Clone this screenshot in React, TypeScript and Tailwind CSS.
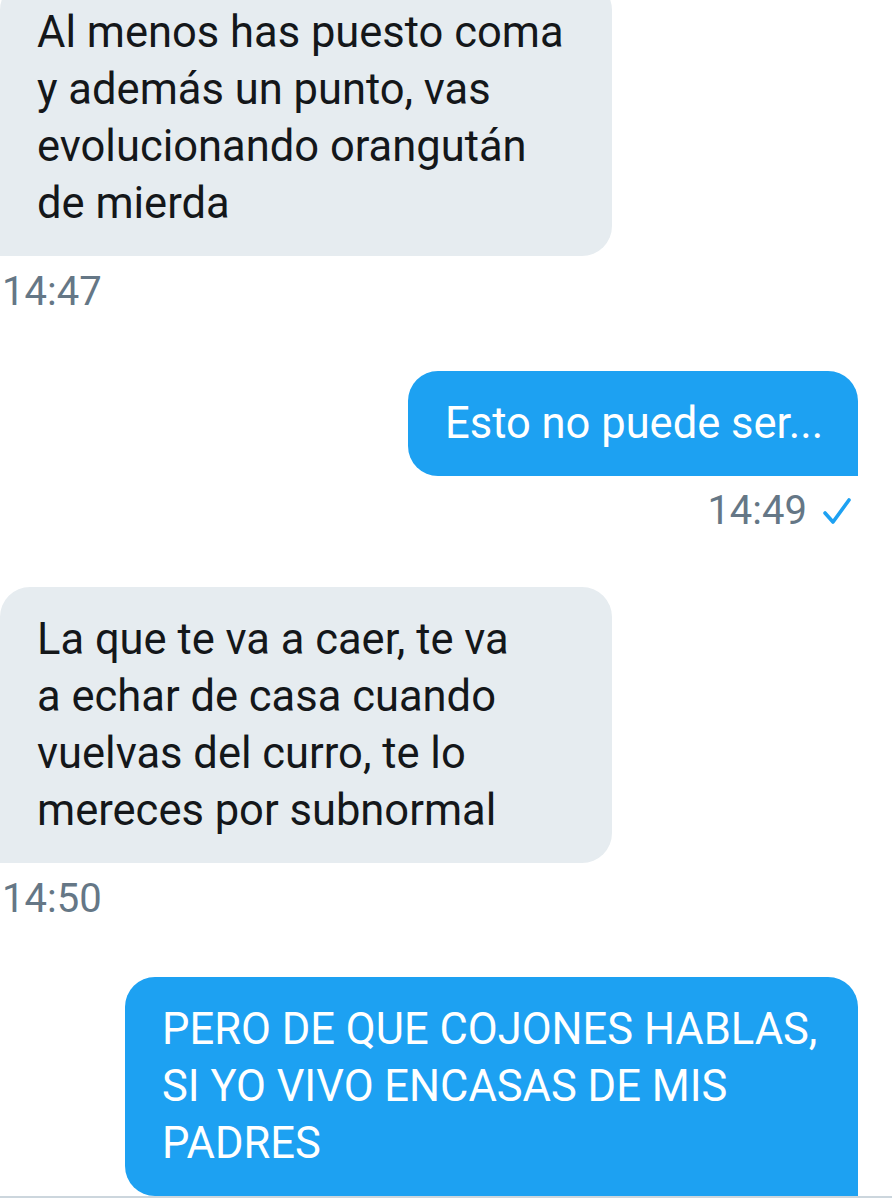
import React from "react";

const font = { fontFamily: "Roboto, 'Noto Sans', sans-serif" };

const Lines = ({ lines }: { lines: string[] }) => (
  <>
    {lines.map((l) => (
      <div key={l} className="whitespace-nowrap">
        {l}
      </div>
    ))}
  </>
);

const Received = ({ lines, time, className = "" }: { lines: string[]; time: string; className?: string }) => (
  <div className={`flex flex-col items-start ${className}`}>
    <div className="w-[612px] rounded-tl-[30px] rounded-tr-[30px] rounded-br-[30px] bg-[#e6ecf0] px-[37px] py-[24px] text-[43.5px] leading-[57px] text-[#14171a]">
      <Lines lines={lines} />
    </div>
    <div className="mt-[14px] h-[44px] pl-[2px] text-[40px] leading-[44px] text-[#657786]">{time}</div>
  </div>
);

const Sent = ({
  lines,
  time,
  width,
  className = "",
}: {
  lines: string[];
  time?: string;
  width: string;
  className?: string;
}) => (
  <div className={`flex flex-col items-end pr-[34px] ${className}`}>
    <div
      className={`${width} rounded-tl-[30px] rounded-tr-[30px] rounded-bl-[30px] bg-[#1da1f2] px-[37px] py-[24px] text-[43.5px] leading-[57px] text-white`}
    >
      <Lines lines={lines} />
    </div>
    {time && (
      <div className="mt-[13px] flex h-[44px] items-center gap-[15px] pr-[6px] text-[40px] leading-[44px] text-[#657786]">
        <span>{time}</span>
        <svg width="30" height="30" viewBox="0 0 30 30" fill="none">
          <path d="M3 17 L11 26 L27 4" stroke="#1da1f2" strokeWidth="3.6" strokeLinecap="round" strokeLinejoin="round" />
        </svg>
      </div>
    )}
  </div>
);

export default function App() {
  return (
    <div className="h-[1200px] w-[892px] overflow-hidden bg-white" style={font}>
      <div className="mt-[-20px] flex flex-col">
        <Received
          lines={["Al menos has puesto coma", "y además un punto, vas", "evolucionando orangután", "de mierda"]}
          time="14:47"
        />
        <Sent className="mt-[57px]" width="w-[450px]" lines={["Esto no puede ser..."]} time="14:49" />
        <Received
          className="mt-[54px]"
          lines={["La que te va a caer, te va", "a echar de casa cuando", "vuelvas del curro, te lo", "mereces por subnormal"]}
          time="14:50"
        />
        <Sent
          className="mt-[56px]"
          width="w-[733px]"
          lines={["PERO DE QUE COJONES HABLAS,", "SI YO VIVO ENCASAS DE MIS", "PADRES"]}
        />
        <div className="border-t-2 border-[#ccd6dd]" />
      </div>
    </div>
  );
}
